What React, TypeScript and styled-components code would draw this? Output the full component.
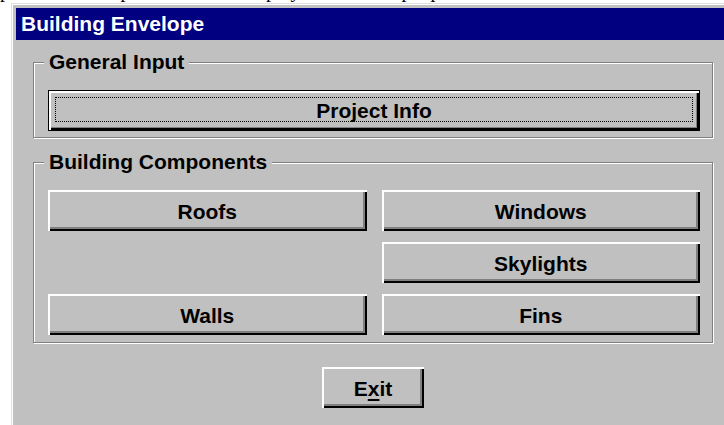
import styled, { createGlobalStyle } from "styled-components";

const GlobalStyle = createGlobalStyle`
  html, body {
    margin: 0;
    padding: 0;
    background: #ffffff;
    overflow: hidden;
  }
  body {
    font-family: "Liberation Sans", Arial, sans-serif;
  }
`;

const Page = styled.div`
  width: 724px;
  height: 425px;
  overflow: hidden;
`;

// the end of the paragraph above the dialog, mostly scrolled out of view
const Caption = styled.div`
  height: 3px;
  overflow: hidden;
  font-family: "Liberation Serif", "Times New Roman", serif;
  font-size: 20px;
  line-height: 20px;
  white-space: nowrap;
  color: #000;

  span {
    display: block;
    margin-top: -20px;
  }
`;

const Window = styled.div`
  box-sizing: border-box;
  width: 724px;
  margin-left: 11px;
  padding: 4px;
  min-height: 440px;
  background: #c0c0c0;
  border: 1px solid #dfdfdf;
  box-shadow: inset 1px 1px 0 #ffffff;
`;

const TitleBar = styled.div`
  display: flex;
  align-items: center;
  height: 32px;
  padding-left: 5px;
  background: #000080;
  color: #ffffff;
  font-weight: bold;
  font-size: 21px;
`;

const Client = styled.div`
  display: flex;
  flex-direction: column;
  padding: 10px 17px 0;
`;

const Group = styled.fieldset<{ $gap?: number }>`
  margin: ${({ $gap }) => $gap ?? 0}px 0 0;
  padding: 0;
  min-width: 0;
  border: 1px solid #808080;
  box-shadow: inset 1px 1px 0 #ffffff, 1px 1px 0 #ffffff;
`;

const Legend = styled.legend`
  margin-left: 10px;
  padding: 0 5px;
  background: #c0c0c0;
  font-weight: bold;
  font-size: 21px;
  line-height: 24px;
  color: #000;
`;

const GroupBody = styled.div<{ $bottom: number }>`
  padding: 16px 12px ${({ $bottom }) => $bottom}px 14px;
`;

const ButtonGrid = styled.div`
  display: grid;
  grid-template-columns: 1fr 1fr;
  grid-auto-rows: 41px;
  column-gap: 15px;
  row-gap: 11px;
`;

const Button = styled.button<{ $col?: number; $row?: number }>`
  display: flex;
  align-items: center;
  justify-content: center;
  box-sizing: border-box;
  height: 41px;
  margin: 0;
  padding: 3px 0 0;
  border: none;
  background: #c0c0c0;
  font-family: "Liberation Sans", Arial, sans-serif;
  font-weight: bold;
  font-size: 21px;
  color: #000;
  box-shadow: inset 2px 2px 0 #ffffff, inset -2px -2px 0 #000000,
    inset -4px -4px 0 #808080;
  grid-column: ${({ $col }) => $col ?? "auto"};
  grid-row: ${({ $row }) => $row ?? "auto"};

  u {
    text-underline-offset: 3px;
    text-decoration-thickness: 2px;
  }
`;

const DefaultButton = styled(Button)`
  width: 100%;
  border: 1px solid #000000;
  padding: 6px 6px 8px 6px;
  box-shadow: inset 2px 2px 0 #ffffff, inset -2px -2px 0 #000000,
    inset -3px -3px 0 #808080;
`;

const FocusRing = styled.span`
  display: flex;
  align-items: center;
  justify-content: center;
  flex: 1;
  align-self: stretch;
  padding-top: 2px;
  border: 1px dotted #000;
`;

const Footer = styled.div`
  display: flex;
  justify-content: center;
  margin-top: 24px;
`;

const ExitButton = styled(Button)`
  width: 102px;
`;

export default function App() {
  return (
    <Page>
      <GlobalStyle />
      <Caption>
        <span>
          p&nbsp;&nbsp;&nbsp;&nbsp;&nbsp;&nbsp;&nbsp;&nbsp;&nbsp;&nbsp;&nbsp;&nbsp;&nbsp;&nbsp;&nbsp;&nbsp;&nbsp;&nbsp;
          input&nbsp;&nbsp;screen&nbsp;&nbsp;to&nbsp;&nbsp;display&nbsp;&nbsp;the&nbsp;&nbsp;Envelope&nbsp;&nbsp;panel
        </span>
      </Caption>
      <Window>
        <TitleBar>Building Envelope</TitleBar>
        <Client>
          <Group>
            <Legend>General Input</Legend>
            <GroupBody $bottom={6}>
              <DefaultButton>
                <FocusRing>Project Info</FocusRing>
              </DefaultButton>
            </GroupBody>
          </Group>
          <Group $gap={12}>
            <Legend>Building Components</Legend>
            <GroupBody $bottom={7}>
              <ButtonGrid>
                <Button $col={1} $row={1}>Roofs</Button>
                <Button $col={2} $row={1}>Windows</Button>
                <Button $col={2} $row={2}>Skylights</Button>
                <Button $col={1} $row={3}>Walls</Button>
                <Button $col={2} $row={3}>Fins</Button>
              </ButtonGrid>
            </GroupBody>
          </Group>
          <Footer>
            <ExitButton>
              E<u>x</u>it
            </ExitButton>
          </Footer>
        </Client>
      </Window>
    </Page>
  );
}
